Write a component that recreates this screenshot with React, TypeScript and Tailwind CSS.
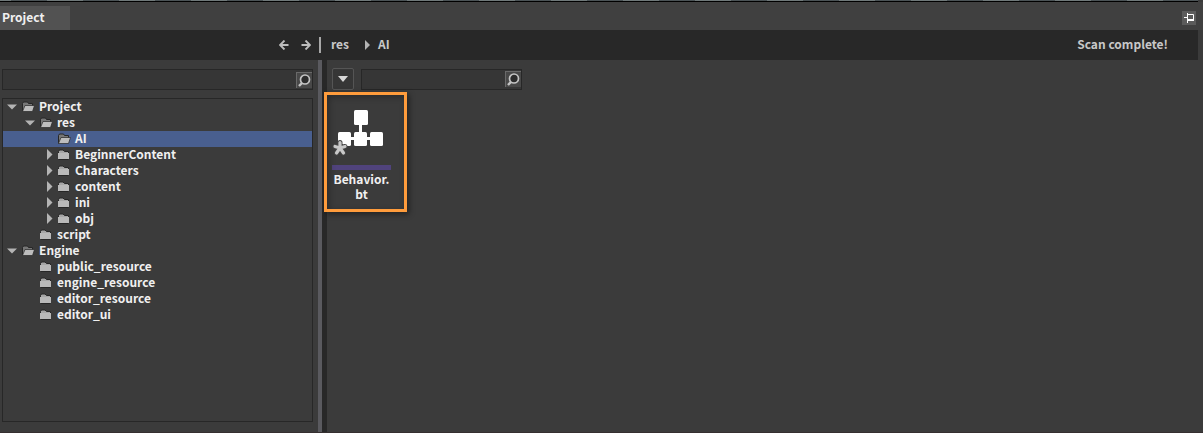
import React, { useState } from "react";

type Node = { name: string; level: number; open?: boolean; arrow?: boolean };

const nodes: Node[] = [
  { name: "Project", level: 0, open: true, arrow: true },
  { name: "res", level: 1, open: true, arrow: true },
  { name: "AI", level: 2, open: true },
  { name: "BeginnerContent", level: 2, arrow: true },
  { name: "Characters", level: 2, arrow: true },
  { name: "content", level: 2, arrow: true },
  { name: "ini", level: 2, arrow: true },
  { name: "obj", level: 2, arrow: true },
  { name: "script", level: 1 },
  { name: "Engine", level: 0, open: true, arrow: true },
  { name: "public_resource", level: 1 },
  { name: "engine_resource", level: 1 },
  { name: "editor_resource", level: 1 },
  { name: "editor_ui", level: 1 },
];

const indent = ["pl-1", "pl-[22px]", "pl-10"];

function Arrow({ open }: { open?: boolean }) {
  return (
    <svg width="10" height="12" viewBox="0 0 10 12" fill="#b4b4b4" aria-hidden="true">
      {open ? <path d="M0 3.500h10L5 8.500z" /> : <path d="M4 0v11l5.500-5.500z" />}
    </svg>
  );
}

function Folder({ open }: { open?: boolean }) {
  return (
    <svg className="shrink-0" width="14" height="12" viewBox="0 0 14 12" aria-hidden="true">
      {open ? (
        <>
          <path d="M1.500 10.500V2.500l1-1.500h4l1 1.500h4V6" fill="#777" stroke="#262626" />
          <path d="M1.500 10.500L4 4.500h9.500L11.500 10.500z" fill="#bdbdbd" stroke="#262626" strokeWidth=".7" />
        </>
      ) : (
        <>
          <path d="M1.500 10.500V2.500l1-1.500h3.500l1.500 1.500h4v8z" fill="#a6a6a6" stroke="#262626" />
          <path d="M1 4h11v6H1z" fill="#b9b9b9" />
        </>
      )}
    </svg>
  );
}

function SearchBox({ label, className }: { label: string; className: string }) {
  return (
    <div className={`flex h-[21px] items-center border border-[#272727] bg-[#363636] ${className}`}>
      <input aria-label={label} className="h-full min-w-0 flex-1 bg-transparent px-1 outline-none" />
      <button aria-label={`Run ${label}`} className="size-4 border-t border-l border-[#6a6a6a] bg-[#484848]">
        <svg width="15" height="15" viewBox="0 0 15 15" fill="none" aria-hidden="true">
          <circle cx="8" cy="6.500" r="4.500" fill="#2c2c2c" stroke="#c4c4c4" strokeWidth="1.700" />
          <path d="M5 10L2 13" stroke="#c4c4c4" strokeWidth="2.400" />
        </svg>
      </button>
    </div>
  );
}

function NavArrow({ label, d }: { label: string; d: string }) {
  return (
    <button aria-label={label} className="size-[10px]">
      <svg width="10" height="10" viewBox="0 0 10 10" fill="none" stroke="#bdbdbd" strokeWidth="1.900" aria-hidden="true">
        <path d={d} />
      </svg>
    </button>
  );
}

export default function App() {
  const [selected, setSelected] = useState("AI");
  return (
    <div className="flex min-h-screen flex-col border-b border-[#352f30] bg-[#3b3b3b] pr-[5px] font-['Noto_Sans_CJK_SC',sans-serif] text-[12px] leading-4 font-bold text-[#f0f0f0]">
      <div className="h-[2px] border-b border-black bg-[repeating-linear-gradient(90deg,#6f7879_0px,#6f7879_11px,#4b5356_11px,#4b5356_47px,#6f7879_47px,#6f7879_72px)]" />
      <header className="-mr-[5px] flex h-7 items-end justify-between bg-[#404040]">
        <button className="h-6 w-[70px] bg-[#525252] pb-[2px] pl-[2px] text-left">Project</button>
        <button aria-label="Pin panel" className="mr-[7px] mb-[5px] size-[14px] bg-[#5b5b5b]">
          <svg width="14" height="14" viewBox="0 0 14 14" fill="none" stroke="#fff" aria-hidden="true">
            <path d="M2 6.500h3M5.500 2v10M5.500 3.500h6v5" />
            <path d="M5 9h7" strokeWidth="2" />
          </svg>
        </button>
      </header>
      <nav className="flex h-[30px] items-center bg-[#282828] pr-[30px] pl-[279px] text-[#c8c8c8]">
        <NavArrow label="Back" d="M9.500 5H1.500M5.500.500L1 5l4.500 4.500" />
        <span className="w-3" />
        <NavArrow label="Forward" d="M.5 5h8M4.500.500L9 5l-4.500 4.500" />
        <span className="ml-2 h-4 w-[2px] bg-[#a8a8a8]" />
        <a href="#res" className="ml-[10px] pb-[2px]">res</a>
        <svg className="mr-[7px] ml-4" width="6" height="10" viewBox="0 0 6 10" fill="#b4b4b4" aria-hidden="true">
          <path d="M0 0l5 5-5 5z" />
        </svg>
        <a href="#ai" className="pb-[2px]">AI</a>
        <span className="ml-auto pb-[2px]">Scan complete!</span>
      </nav>
      <main className="flex flex-1">
        <aside className="flex w-[318px] shrink-0 flex-col gap-2 pt-[9px] pr-[5px] pb-[10px] pl-[2px]">
          <SearchBox label="Search folders" className="w-full" />
          <div role="tree" className="flex flex-1 flex-col border border-[#272727]">
            {nodes.map((n) => (
              <button
                key={n.name}
                role="treeitem"
                aria-selected={selected === n.name}
                onClick={() => setSelected(n.name)}
                className={`flex h-4 items-center text-left ${indent[n.level]} ${selected === n.name ? "bg-[#495f8f]" : ""}`}
              >
                <span className="w-[14px]">{n.arrow && <Arrow open={n.open} />}</span>
                <Folder open={n.open} />
                <span className="ml-1 pb-[2px]">{n.name}</span>
              </button>
            ))}
          </div>
        </aside>
        <div className="w-1 shrink-0 bg-[#5a5a5f]" />
        <div className="w-[5px] shrink-0 bg-[#282828]" />
        <section className="min-w-0 flex-1 pt-2 pl-[5px]">
          <div className="flex items-center gap-[7px]">
            <button aria-label="Filter" className="flex size-[22px] items-center justify-center rounded-xs border border-[#555] bg-[#363636]">
              <svg width="10" height="6" viewBox="0 0 10 6" fill="#d8d8d8" aria-hidden="true">
                <path d="M0 0h10L5 6z" />
              </svg>
            </button>
            <SearchBox label="Search files" className="w-[161px]" />
          </div>
          <div className="relative mt-3 w-[59px]">
            <div className="absolute -top-[10px] -left-2 h-[120px] w-[83px] border-3 border-[#ff9c3c] shadow-[2px_2px_6px_rgba(0,0,0,0.45),inset_2px_2px_6px_rgba(0,0,0,0.3)]" />
            <svg width="59" height="63" viewBox="0 0 59 63" aria-hidden="true">
              <g fill="#fff">
                <rect x="22" y="8" width="14" height="15" rx="1.500" />
                <path d="M27 22h3v9h-3zM18 35h24v3H18z" />
                <rect x="6" y="30" width="13" height="14" rx="1.500" />
                <rect x="22" y="30" width="13" height="14" rx="1.500" />
                <rect x="38" y="30" width="13" height="14" rx="1.500" />
              </g>
              <g fill="none" strokeLinecap="round">
                <path d="M8 46V40.500M8 46l-5-1.500M8 46l5-1.500M8 46l-3.500 5M8 46l3.500 5" stroke="#444" strokeWidth="5" />
                <path d="M8 46V40.500M8 46l-5-1.500M8 46l5-1.500M8 46l-3.500 5M8 46l3.500 5" stroke="#c8c8c8" strokeWidth="3.200" />
              </g>
            </svg>
            <div className="h-[5px] bg-[#50437c]" />
            <p className="mt-px text-center leading-[15px]">
              Behavior.
              <br />
              bt
            </p>
          </div>
        </section>
      </main>
    </div>
  );
}
